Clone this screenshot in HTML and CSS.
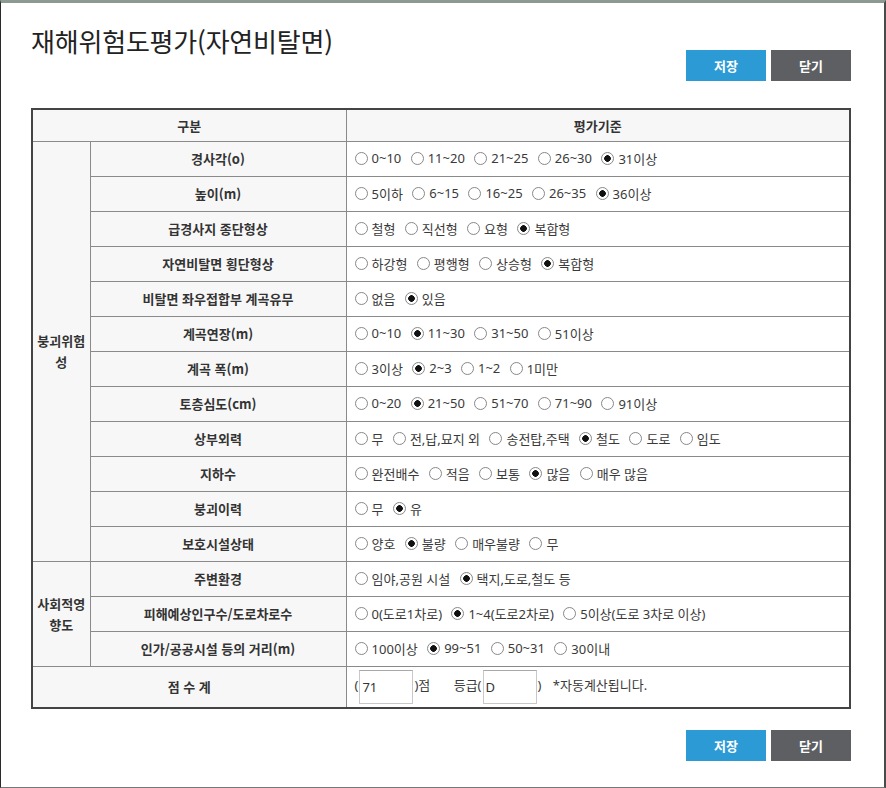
FILE: index.html
```html
<!DOCTYPE html>
<html lang="ko">
<head>
    <meta charset="UTF-8">
    <title>재해위험도평가(자연비탈면)</title>
    <link rel="stylesheet" href="styles.css">
</head>
<body>
<div class="window">

    <div class="head">
        <h1 class="title">재해위험도평가(자연비탈면)</h1>
        <div class="btns">
            <a class="btn save" href="javascript:void(0)">저장</a>
            <a class="btn close" href="javascript:void(0)">닫기</a>
        </div>
    </div>

    <table class="evaltable">
        <colgroup>
            <col style="width: 58px">
            <col style="width: 256px">
            <col>
        </colgroup>
        <tr>
            <th colspan="2">구분</th>
            <th>평가기준</th>
        </tr>
        <tr>
            <th rowspan="12" class="cat">붕괴위험성</th>
            <th>경사각(o)</th>
            <td>
                <label><input type="radio" name="r1">0~10</label>
                <label><input type="radio" name="r1">11~20</label>
                <label><input type="radio" name="r1">21~25</label>
                <label><input type="radio" name="r1">26~30</label>
                <label><input type="radio" name="r1" checked>31이상</label>
            </td>
        </tr>
        <tr>
            <th>높이(m)</th>
            <td>
                <label><input type="radio" name="r2">5이하</label>
                <label><input type="radio" name="r2">6~15</label>
                <label><input type="radio" name="r2">16~25</label>
                <label><input type="radio" name="r2">26~35</label>
                <label><input type="radio" name="r2" checked>36이상</label>
            </td>
        </tr>
        <tr>
            <th>급경사지 종단형상</th>
            <td>
                <label><input type="radio" name="r3">철형</label>
                <label><input type="radio" name="r3">직선형</label>
                <label><input type="radio" name="r3">요형</label>
                <label><input type="radio" name="r3" checked>복합형</label>
            </td>
        </tr>
        <tr>
            <th>자연비탈면 횡단형상</th>
            <td>
                <label><input type="radio" name="r4">하강형</label>
                <label><input type="radio" name="r4">평행형</label>
                <label><input type="radio" name="r4">상승형</label>
                <label><input type="radio" name="r4" checked>복합형</label>
            </td>
        </tr>
        <tr>
            <th>비탈면 좌우접합부 계곡유무</th>
            <td>
                <label><input type="radio" name="r5">없음</label>
                <label><input type="radio" name="r5" checked>있음</label>
            </td>
        </tr>
        <tr>
            <th>계곡연장(m)</th>
            <td>
                <label><input type="radio" name="r6">0~10</label>
                <label><input type="radio" name="r6" checked>11~30</label>
                <label><input type="radio" name="r6">31~50</label>
                <label><input type="radio" name="r6">51이상</label>
            </td>
        </tr>
        <tr>
            <th>계곡 폭(m)</th>
            <td>
                <label><input type="radio" name="r7">3이상</label>
                <label><input type="radio" name="r7" checked>2~3</label>
                <label><input type="radio" name="r7">1~2</label>
                <label><input type="radio" name="r7">1미만</label>
            </td>
        </tr>
        <tr>
            <th>토층심도(cm)</th>
            <td>
                <label><input type="radio" name="r8">0~20</label>
                <label><input type="radio" name="r8" checked>21~50</label>
                <label><input type="radio" name="r8">51~70</label>
                <label><input type="radio" name="r8">71~90</label>
                <label><input type="radio" name="r8">91이상</label>
            </td>
        </tr>
        <tr>
            <th>상부외력</th>
            <td>
                <label><input type="radio" name="r9">무</label>
                <label><input type="radio" name="r9">전,답,묘지 외</label>
                <label><input type="radio" name="r9">송전탑,주택</label>
                <label><input type="radio" name="r9" checked>철도</label>
                <label><input type="radio" name="r9">도로</label>
                <label><input type="radio" name="r9">임도</label>
            </td>
        </tr>
        <tr>
            <th>지하수</th>
            <td>
                <label><input type="radio" name="r10">완전배수</label>
                <label><input type="radio" name="r10">적음</label>
                <label><input type="radio" name="r10">보통</label>
                <label><input type="radio" name="r10" checked>많음</label>
                <label><input type="radio" name="r10">매우 많음</label>
            </td>
        </tr>
        <tr>
            <th>붕괴이력</th>
            <td>
                <label><input type="radio" name="r11">무</label>
                <label><input type="radio" name="r11" checked>유</label>
            </td>
        </tr>
        <tr>
            <th>보호시설상태</th>
            <td>
                <label><input type="radio" name="r12">양호</label>
                <label><input type="radio" name="r12" checked>불량</label>
                <label><input type="radio" name="r12">매우불량</label>
                <label><input type="radio" name="r12">무</label>
            </td>
        </tr>
        <tr>
            <th rowspan="3" class="cat">사회적영향도</th>
            <th>주변환경</th>
            <td>
                <label><input type="radio" name="r13">임야,공원 시설</label>
                <label><input type="radio" name="r13" checked>택지,도로,철도 등</label>
            </td>
        </tr>
        <tr>
            <th>피해예상인구수/도로차로수</th>
            <td>
                <label><input type="radio" name="r14">0(도로1차로)</label>
                <label><input type="radio" name="r14" checked>1~4(도로2차로)</label>
                <label><input type="radio" name="r14">5이상(도로 3차로 이상)</label>
            </td>
        </tr>
        <tr>
            <th>인가/공공시설 등의 거리(m)</th>
            <td>
                <label><input type="radio" name="r15">100이상</label>
                <label><input type="radio" name="r15" checked>99~51</label>
                <label><input type="radio" name="r15">50~31</label>
                <label><input type="radio" name="r15">30이내</label>
            </td>
        </tr>
        <tr class="sumrow">
            <th colspan="2">점 수 계</th>
            <td>
                (<input class="box" type="text" value="71">)점
                <span class="grade">등급(<input class="box" type="text" value="D">)</span>
                <span class="note">*자동계산됩니다.</span>
            </td>
        </tr>
    </table>

    <div class="foot">
        <a class="btn save" href="javascript:void(0)">저장</a>
        <a class="btn close" href="javascript:void(0)">닫기</a>
    </div>

</div>
</body>
</html>
```

FILE: styles.css
```css
*{
    margin:0;
    padding:0;
    box-sizing: border-box;
}

body{
    width: 886px;
    height: 788px;
    background-color: #fff;
    font-family: "Noto Sans CJK KR", "Noto Sans", sans-serif;
    color: #333;
    overflow: hidden;
}

.window{
    width: 886px;
    height: 788px;
    border-top: 3px solid #8c9a92;
    border-left: 1px solid #2a2a2a;
    border-right: 2px solid #4a4a4a;
    border-bottom: 1px solid #777;
    padding-left: 30px;
    padding-right: 33px;
}

.head{
    display: flex;
    justify-content: space-between;
    align-items: flex-start;
    padding-top: 20px;
}

.title{
    font-size: 26px;
    font-weight: normal;
    color: #222;
    line-height: 36px;
    letter-spacing: -0.2px;
}

.btns{
    display: flex;
    gap: 5px;
    margin-top: 27px;
}

.btn{
    display: inline-block;
    width: 80px;
    height: 31px;
    line-height: 31px;
    text-align: center;
    color: #fff;
    font-size: 13px;
    font-weight: bold;
    text-decoration: none;
}

.save{
    background-color: #2b9ad5;
}

.close{
    background-color: #5e5f63;
}

.evaltable{
    width: 820px;
    margin-top: 27px;
    border-collapse: collapse;
    border: 2px solid #444;
    font-size: 13px;
    table-layout: fixed;
}

.evaltable th,
.evaltable td{
    border: 1px solid #8a8a8a;
    height: 35px;
}

.evaltable th{
    background-color: #f7f7f7;
    font-weight: bold;
    color: #333;
    text-align: center;
}

.evaltable tr:first-child th{
    height: 32px;
}

.evaltable td{
    padding-left: 8px;
    white-space: nowrap;
    font-family: "Noto Sans", "Noto Sans CJK KR", sans-serif;
    color: #3a3a3a;
}

.cat{
    padding: 0 2px;
    line-height: 21px;
}

.evaltable label{
    display: inline-flex;
    align-items: center;
    margin-right: 6px;
}

.evaltable input[type=radio]{
    appearance: none;
    width: 13px;
    height: 13px;
    border: 1px solid #888;
    border-radius: 50%;
    background-color: #fff;
    margin-right: 4px;
}

.evaltable input[type=radio]:checked{
    background: radial-gradient(circle, #111 0, #111 3px, #fff 3.6px);
}

.sumrow th,
.sumrow td{
    height: 42px;
}

.box{
    width: 54px;
    height: 34px;
    border: 1px solid #c8c8c8;
    border-top-color: #a9a9a9;
    padding-left: 2px;
    font-family: "Noto Sans", "Noto Sans CJK KR", sans-serif;
    font-size: 13px;
    color: #333;
    vertical-align: middle;
    margin: 0 1px;
}

.grade{
    margin-left: 20px;
}

.note{
    margin-left: 8px;
}

.foot{
    display: flex;
    justify-content: flex-end;
    gap: 5px;
    margin-top: 21px;
    width: 820px;
}
```
